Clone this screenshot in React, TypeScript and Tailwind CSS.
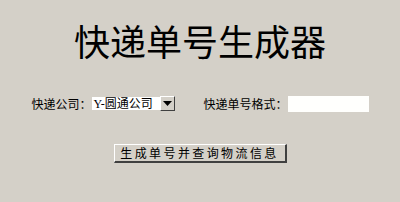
export default function App() {
  const font = { fontFamily: '"Noto Sans CJK SC", "Noto Sans", sans-serif' };

  return (
    <div
      className="min-h-[202px] w-full bg-[#d4d0c8] text-black flex flex-col items-center"
      style={font}
    >
      {/* Title */}
      <h1 className="mt-[22px] h-[36px] text-[36px] leading-[36px] font-normal">快递单号生成器</h1>

      {/* Form row */}
      <div className="mt-[37px] flex items-center h-[17px] text-[12px] leading-[12px]">
        <span className="w-[60px]">快递公司：</span>

        {/* Select */}
        <div className="flex items-center h-[15px]">
          <div
            className="w-[68px] h-[13px] bg-white flex items-center pl-[2px] text-[12px] leading-[12px] whitespace-nowrap overflow-hidden"
            style={{ fontFamily: '"Liberation Serif", "Noto Sans CJK SC", serif' }}
          >
            Y-圆通公司
          </div>
          <div className="w-[15px] h-[15px] bg-[#d4d0c8] border-t border-l border-t-white border-l-white border-b border-r border-b-[#404040] border-r-[#404040] flex items-center justify-center">
            <svg width="9" height="5" viewBox="0 0 9 5">
              <path d="M0 0 H9 L4.5 5 Z" fill="#000" />
            </svg>
          </div>
        </div>

        <span className="ml-[29px] w-[84px]">快递单号格式：</span>
        <div className="w-[81px] h-[16px] bg-[#fffffd]" />
      </div>

      {/* Submit button */}
      <button
        type="button"
        className="mt-[32px] w-[173px] h-[19px] bg-[#d4d0c8] border-t border-l border-t-white border-l-white border-b-2 border-r-2 border-b-[#404040] border-r-[#404040] text-[12px] leading-[12px] tracking-[2.4px] flex items-center justify-center"
        style={font}
      >
        生成单号并查询物流信息
      </button>
    </div>
  );
}
